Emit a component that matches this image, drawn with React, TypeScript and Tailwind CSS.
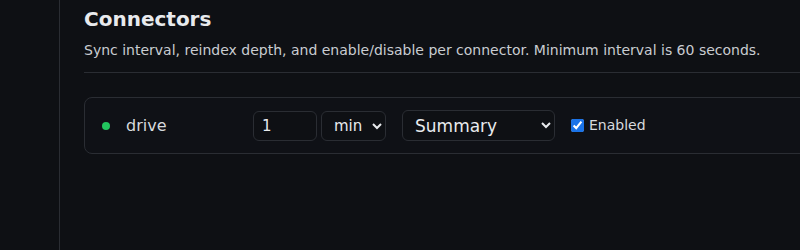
import React from 'react';

const App: React.FC = () => {
  return (
    <div className="flex h-[250px] w-[800px] overflow-hidden bg-[#0e1014] scheme-dark" style={{ fontFamily: '"DejaVu Sans", sans-serif' }}>
      <aside className="w-[60px] shrink-0 border-r border-[#2a2d33]" />
      <main className="w-[1000px] shrink-0 px-6 pt-[5px]">
        <h2 className="text-[20px] font-bold leading-[28px] text-[#e8eaed]">Connectors</h2>
        <p className="mt-[7px] text-sm leading-[20px] text-[#c9ccd1]">
          Sync interval, reindex depth, and enable/disable per connector. Minimum interval is 60 seconds.
        </p>
        <div className="mt-[12px] border-t border-[#2a2d33]" />
        <div className="mt-6 flex h-[57px] items-center rounded-lg border border-[#2a2d33] bg-[#0f1116] pl-4">
          <span className="ml-[1px] h-[8px] w-[8px] rounded-full bg-[#22c55e]" />
          <span className="ml-4 w-[127px] text-[16px] text-[#d7dade]">drive</span>
          <input
            type="text"
            defaultValue="1"
            className="h-[30px] w-[64px] rounded-md border border-[#2a2d33] bg-[#0e1014] px-2 text-[15px] text-[#e8eaed] outline-none"
          />
          <select className="ml-[4px] h-[30px] w-[65px] rounded-md border border-[#2a2d33] bg-[#0e1014] pl-2 text-[15px] text-[#e8eaed]">
            <option>min</option>
            <option>sec</option>
          </select>
          <select className="ml-4 h-[31px] w-[153px] rounded-md border border-[#2a2d33] bg-[#0e1014] pl-2 text-[17px] text-[#e8eaed]">
            <option>Summary</option>
            <option>Full</option>
          </select>
          <label className="ml-4 flex items-center gap-[5px] text-[14px] text-[#d7dade]">
            <input type="checkbox" defaultChecked className="h-[13px] w-[13px] accent-[#1a73e8]" />
            Enabled
          </label>
        </div>
      </main>
    </div>
  );
};

export default App;
